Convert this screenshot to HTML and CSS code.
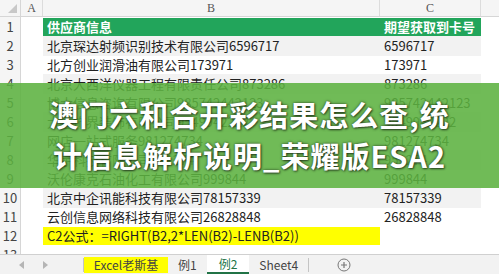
FILE: index.html
```html
<!DOCTYPE html>
<html lang="zh-CN">
<head>
    <meta charset="UTF-8">
    <meta name="viewport" content="width=device-width, initial-scale=1.0">
    <title>供应商信息</title>
    <link rel="stylesheet" href="styles.css">
</head>
<body>
    <div class="sheet">
        <div class="row col-head">
            <div class="corner">
                <svg width="9" height="9" viewBox="0 0 9 9"><polygon points="9,0 9,9 0,9" fill="#c8c8c8"/></svg>
            </div>
            <div class="ch">A</div>
            <div class="ch">B</div>
            <div class="ch">C</div>
            <div class="ch rest"></div>
        </div>
        <div class="row">
            <div class="rh">1</div><div class="cell"></div>
            <div class="cell head">供应商信息</div><div class="cell head">期望获取到卡号</div><div></div>
        </div>
        <div class="row band">
            <div class="rh">2</div><div class="cell"></div>
            <div class="cell">北京琛达射频识别技术有限公司6596717</div><div class="cell">6596717</div><div></div>
        </div>
        <div class="row">
            <div class="rh">3</div><div class="cell"></div>
            <div class="cell">北方创业润滑油有限公司173971</div><div class="cell">173971</div><div></div>
        </div>
        <div class="row band">
            <div class="rh">4</div><div class="cell"></div>
            <div class="cell">北京大西洋仪器工程有限责任公司873286</div><div class="cell">873286</div><div></div>
        </div>
        <div class="row">
            <div class="rh">5</div><div class="cell"></div>
            <div class="cell">博大信息咨询有限公司985742442123</div><div class="cell">985742442123</div><div></div>
        </div>
        <div class="row band">
            <div class="rh">6</div><div class="cell"></div>
            <div class="cell">大连饰界装饰有限公司9549942222</div><div class="cell">9549942222</div><div></div>
        </div>
        <div class="row">
            <div class="rh">7</div><div class="cell"></div>
            <div class="cell">网店一站式服务981274734</div><div class="cell">981274734</div><div></div>
        </div>
        <div class="row band">
            <div class="rh">8</div><div class="cell"></div>
            <div class="cell">华宇科技有限公司951274</div><div class="cell">951274</div><div></div>
        </div>
        <div class="row">
            <div class="rh">9</div><div class="cell"></div>
            <div class="cell">沃伦康克石油化工有限公司999844</div><div class="cell">999844</div><div></div>
        </div>
        <div class="row band">
            <div class="rh">10</div><div class="cell"></div>
            <div class="cell">北京中企讯能科技有限公司78157339</div><div class="cell">78157339</div><div></div>
        </div>
        <div class="row">
            <div class="rh">11</div><div class="cell"></div>
            <div class="cell">云创信息网络科技有限公司26828848</div><div class="cell">26828848</div><div></div>
        </div>
        <div class="row">
            <div class="rh">12</div><div class="cell"></div>
            <div class="cell formula">C2公式：=RIGHT(B2,2*LEN(B2)-LENB(B2))</div><div class="cell"></div><div></div>
        </div>
        <div class="row">
            <div class="rh">13</div><div class="cell"></div>
            <div class="cell"></div><div class="cell"></div><div></div>
        </div>
    </div>

    <div class="banner">
        <div>澳门六和合开彩结果怎么查,统</div>
        <div>计信息解析说明_荣耀版ESA2</div>
    </div>

    <div class="tabs">
        <div class="nav">
            <svg width="6" height="8" viewBox="0 0 6 8"><polygon points="5,0 5,8 0,4" fill="#b5b5b5"/></svg>
            <svg width="6" height="8" viewBox="0 0 6 8"><polygon points="1,0 1,8 6,4" fill="#b5b5b5"/></svg>
        </div>
        <div class="sep"></div>
        <div class="tab yellow">Excel老斯基</div>
        <div class="tab">例1</div>
        <div class="tab active">例2</div>
        <div class="tab">Sheet4</div>
        <div class="sep"></div>
        <div class="add">
            <svg width="14" height="14" viewBox="0 0 14 14">
                <circle cx="7" cy="7" r="6" fill="none" stroke="#777" stroke-width="1"/>
                <path d="M7 4v6M4 7h6" stroke="#777" stroke-width="1.2"/>
            </svg>
        </div>
    </div>
</body>
</html>
```

FILE: styles.css
```css
body {
    margin: 0;
    width: 499px;
    height: 274px;
    overflow: hidden;
    position: relative;
    background-color: #fff;
    font-family: "Noto Sans CJK SC", "Noto Sans", sans-serif;
    color: #222;
}
.sheet {
    height: 254px;
    overflow: hidden;
}
.row {
    display: grid;
    grid-template-columns: 21px 22px 337px 101px 1fr;
    height: 19px;
}
.col-head {
    height: 17px;
    background-color: #f5f5f5;
    border-bottom: 1px solid #d6d6d6;
    box-sizing: border-box;
}
.corner {
    display: flex;
    align-items: flex-end;
    justify-content: flex-end;
    padding: 0 3px 3px 0;
    border-right: 1px solid #d6d6d6;
}
.ch {
    font-family: "Liberation Serif", serif;
    font-size: 12px;
    color: #555;
    text-align: center;
    line-height: 16px;
    border-right: 1px solid #dcdcdc;
}
.ch.rest {
    border-right: none;
}
.rh {
    background-color: #f5f5f5;
    border-right: 1px solid #d6d6d6;
    border-bottom: 1px solid #e2e2e2;
    box-sizing: border-box;
    font-size: 13px;
    color: #444;
    text-align: center;
    line-height: 19px;
}
.cell {
    font-size: 13px;
    line-height: 19px;
    padding-left: 4px;
    white-space: nowrap;
    overflow: hidden;
}
.band .cell:nth-child(3),
.band .cell:nth-child(4) {
    background-color: #f2f2f2;
}
.cell.head {
    background-color: #22a55b;
    color: #fff;
    font-weight: bold;
    margin: 1px 0;
    line-height: 17px;
}
.cell.formula {
    background-color: #ffff00;
    margin: 1px 0;
    line-height: 17px;
}
/* green caption band laid over the sheet */
.banner {
    position: absolute;
    top: 83px;
    left: 0;
    width: 499px;
    height: 105px;
    box-sizing: border-box;
    padding-top: 11px;
    background-color: rgba(92, 178, 64, 0.88);
    color: #fff;
    font-size: 29px;
    font-weight: bold;
    letter-spacing: 1px;
    line-height: 41px;
    text-align: center;
    text-shadow: 0 0 3px rgba(0, 0, 0, 0.6), 1px 1px 2px rgba(0, 0, 0, 0.5);
}
.tabs {
    height: 20px;
    background-color: #f2f2f2;
    border-top: 1px solid #d0d0d0;
    box-sizing: border-box;
    display: flex;
    align-items: center;
    font-size: 12px;
    color: #444;
}
.nav {
    width: 83px;
    display: flex;
    gap: 17px;
    padding-left: 19px;
    box-sizing: border-box;
}
.sep {
    width: 1px;
    height: 14px;
    background-color: #c4c4c4;
}
.tab {
    height: 19px;
    line-height: 19px;
    padding: 0 10px;
}
.tab.yellow {
    background-color: #ffff00;
    height: 16px;
    line-height: 16px;
    width: 84px;
    box-sizing: border-box;
    padding: 0;
    text-align: center;
}
.tab.active {
    background-color: #fff;
    color: #217346;
    border-bottom: 2px solid #217346;
    box-sizing: border-box;
    height: 19px;
    line-height: 17px;
    padding: 0 12px;
}
.tab:last-of-type {
    padding: 0 8px;
}
.add {
    margin-left: 28px;
    display: flex;
}
```
